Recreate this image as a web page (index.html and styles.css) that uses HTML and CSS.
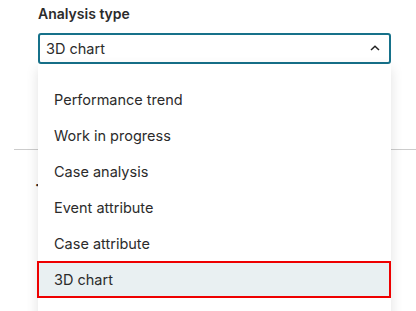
FILE: index.html
```html
<!DOCTYPE html>
<html lang="en">
<head>
  <meta charset="UTF-8">
  <meta name="viewport" content="width=device-width, initial-scale=1.0">
  <title>Analysis type</title>
  <link rel="stylesheet" href="styles.css">
</head>
<body>
  <div class="analysis-panel">
    <div class="analysis-field">
      <label class="analysis-label">Analysis type</label>
      <div class="analysis-select">
        <div class="analysis-select-box">
          <span class="analysis-select-value">3D chart</span>
          <svg class="analysis-select-chevron" width="10" height="6" viewBox="0 0 10 6">
            <path d="M1 5 L5 1.2 L9 5" fill="none" stroke="#222" stroke-width="1.5"/>
          </svg>
        </div>
        <ul class="analysis-menu">
          <li class="analysis-menu-item">Performance trend</li>
          <li class="analysis-menu-item">Work in progress</li>
          <li class="analysis-menu-item">Case analysis</li>
          <li class="analysis-menu-item">Event attribute</li>
          <li class="analysis-menu-item">Case attribute</li>
          <li class="analysis-menu-item analysis-menu-item-selected">3D chart</li>
        </ul>
      </div>
    </div>
    <div class="analysis-divider"></div>
    <div class="analysis-settings">
      <span class="analysis-settings-title">·</span>
    </div>
  </div>
</body>
</html>
```

FILE: styles.css
```css
body {
  margin: 0;
  background-color: #ffffff;
  font-family: "Inter", "Liberation Sans", sans-serif;
  color: #2b2b2b;
}

.analysis-panel {
  width: 100%;
  height: 311px;
  overflow: hidden;
}

.analysis-field {
  display: flex;
  flex-direction: column;
  padding: 5px 25px 0 38px;
}

.analysis-label {
  font-size: 14px;
  font-weight: 600;
  line-height: 17px;
  margin-bottom: 11px;
}

.analysis-select {
  position: relative;
}

.analysis-select-box {
  display: flex;
  align-items: center;
  justify-content: space-between;
  height: 31px;
  padding: 0 9px 0 6px;
  border: 2px solid #16718a;
  border-radius: 3px;
  box-sizing: border-box;
}

.analysis-select-value {
  font-size: 14.5px;
}

.analysis-select-chevron {
  display: block;
  margin-top: -2px;
}

.analysis-menu {
  position: absolute;
  top: 31px;
  left: 0;
  right: 0;
  margin: 0;
  padding: 17px 0 40px;
  list-style: none;
  background-color: #ffffff;
  box-shadow: 0 4px 12px rgba(0, 0, 0, 0.12);
  z-index: 10;
}

.analysis-menu-item {
  height: 36px;
  display: flex;
  align-items: center;
  padding-left: 16px;
  font-size: 14.5px;
  box-sizing: border-box;
}

.analysis-menu-item-selected {
  background-color: #e9f0f2;
  border: 2px solid #ee0000;
  margin-left: -1px;
  padding-left: 15px;
  height: 37px;
}

.analysis-divider {
  height: 1px;
  background-color: #cccccc;
  margin: 85px 0 0 14px;
}

.analysis-settings {
  padding: 24px 0 0 35px;
}

.analysis-settings-title {
  font-size: 14px;
  font-weight: 700;
}
```
